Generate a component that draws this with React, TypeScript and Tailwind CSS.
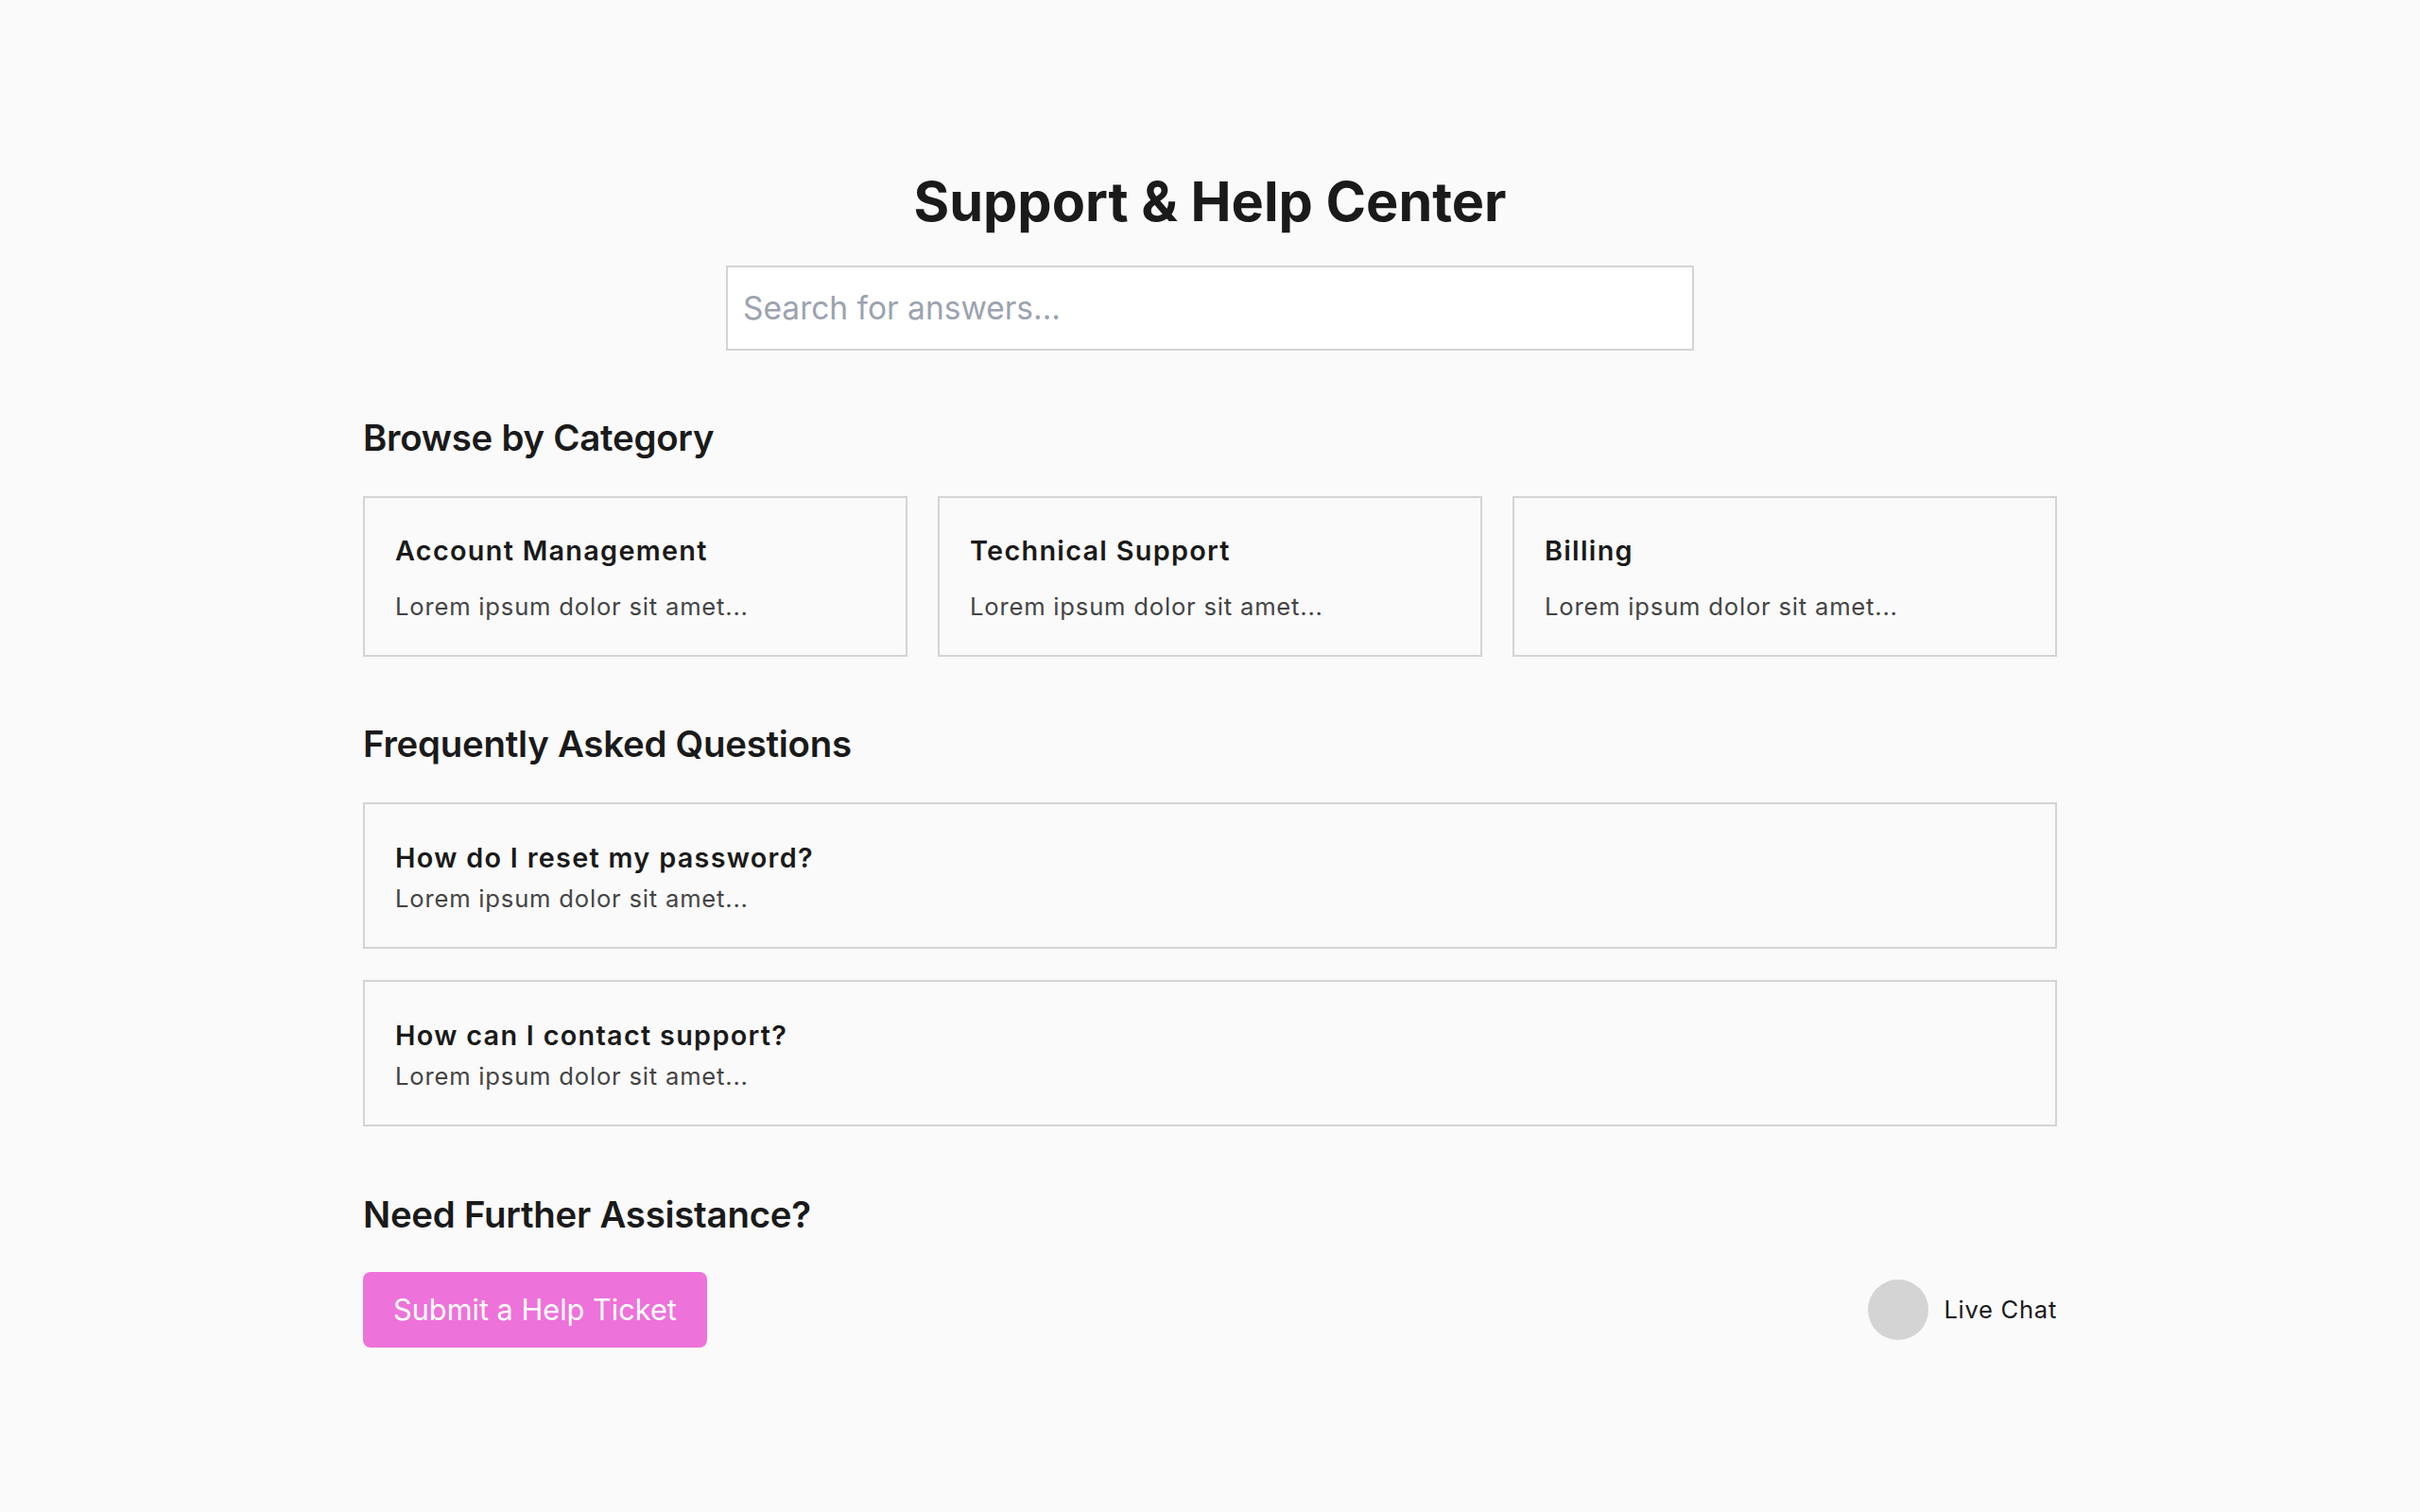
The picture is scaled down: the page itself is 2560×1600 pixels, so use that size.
import React from "react";

const categories = [
  { title: "Account Management", note: "Lorem ipsum dolor sit amet..." },
  { title: "Technical Support", note: "Lorem ipsum dolor sit amet..." },
  { title: "Billing", note: "Lorem ipsum dolor sit amet..." },
];

const faqs = [
  { q: "How do I reset my password?", a: "Lorem ipsum dolor sit amet..." },
  { q: "How can I contact support?", a: "Lorem ipsum dolor sit amet..." },
];

export default function App() {
  return (
    <div className="min-h-screen bg-[#fafafa] font-['Inter',sans-serif] text-[#1a1a1a]">
      <div className="mx-auto w-[1792px] pt-[170px] pb-[120px]">
        <h1 className="text-center text-[57.6px] font-bold leading-[86px]">Support &amp; Help Center</h1>

        <div className="mt-[25px] flex justify-center">
          <input
            type="text"
            placeholder="Search for answers..."
            className="h-[90px] w-[1024px] border-2 border-[#d4d4d4] bg-white px-[16px] text-[33.5px] outline-none placeholder:text-[#9ca3af]"
          />
        </div>

        <section className="mt-[64px]">
          <h2 className="text-[38.4px] font-semibold leading-[57.6px] tracking-[-0.25px]">Browse by Category</h2>
          <div className="mt-[32px] grid grid-cols-3 gap-[32px]">
            {categories.map((c) => (
              <div key={c.title} className="border-2 border-[#d4d4d4] p-[32px]">
                <h3 className="text-[28.8px] font-semibold leading-[48px] tracking-[1.3px]">{c.title}</h3>
                <p className="mt-[16px] text-[25.6px] leading-[38.4px] tracking-[0.8px] text-[#444444]">{c.note}</p>
              </div>
            ))}
          </div>
        </section>

        <section className="mt-[64px]">
          <h2 className="text-[38.4px] font-semibold leading-[57.6px] tracking-[-0.25px]">Frequently Asked Questions</h2>
          <div className="mt-[32px] flex flex-col gap-[33px]">
            {faqs.map((f) => (
              <div key={f.q} className="border-2 border-[#d4d4d4] px-[32px] pt-[33px] pb-[32px]">
                <h3 className="text-[28.8px] font-semibold leading-[48px] tracking-[1.3px]">{f.q}</h3>
                <p className="text-[25.6px] leading-[38.4px] tracking-[0.8px] text-[#444444]">{f.a}</p>
              </div>
            ))}
          </div>
        </section>

        <section className="mt-[65px]">
          <h2 className="text-[38.4px] font-semibold leading-[57.6px] tracking-[-0.25px]">Need Further Assistance?</h2>
          <div className="mt-[31px] flex items-center justify-between">
            <button className="h-[80px] rounded-[8px] bg-[#ed72da] px-[32px] text-[30.7px] text-white">
              Submit a Help Ticket
            </button>
            <div className="flex items-center gap-[16px]">
              <div className="h-[64px] w-[64px] rounded-full bg-[#d4d4d4]" />
              <span className="text-[25.6px] leading-[38.4px] tracking-[0.7px]">Live Chat</span>
            </div>
          </div>
        </section>
      </div>
    </div>
  );
}
